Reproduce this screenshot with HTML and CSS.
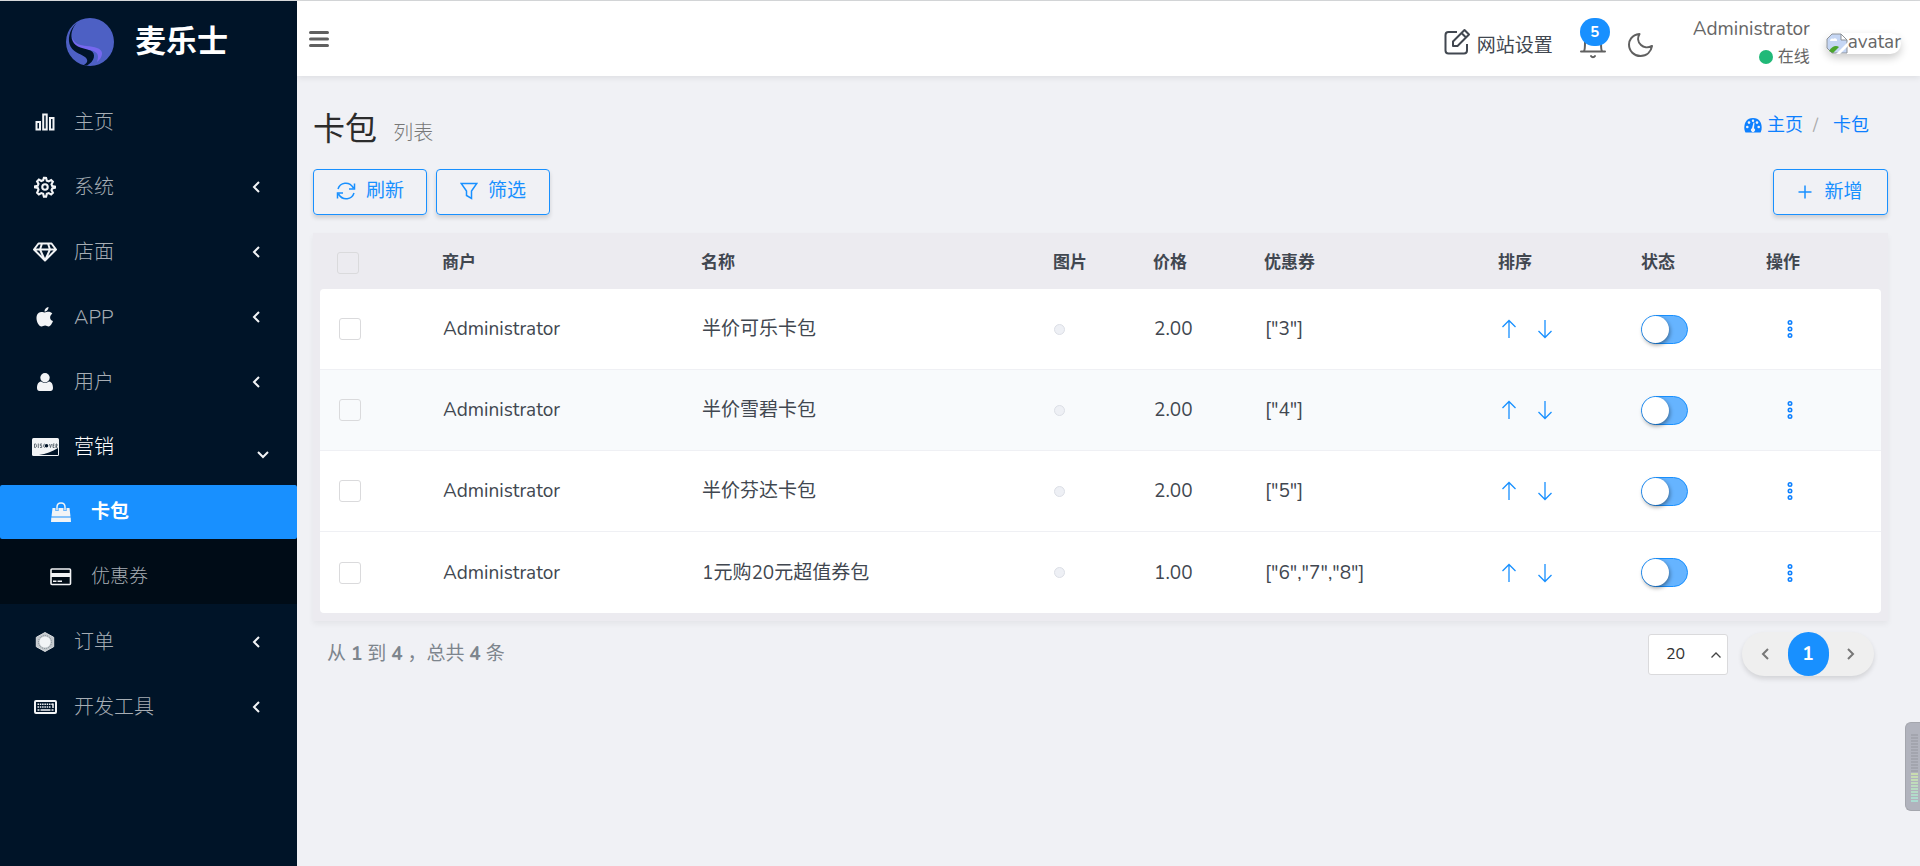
FILE: index.html
```html
<!DOCTYPE html>
<html lang="zh-CN">
<head>
<meta charset="utf-8">
<title>卡包</title>
<link rel="stylesheet" href="styles.css">
</head>
<body>
<svg class="sprite" aria-hidden="true">
  <symbol id="chev-left" viewBox="0 0 10 14"><path d="M8 2 3 7l5 5"/></symbol>
  <symbol id="arrow-up" viewBox="0 0 16 20"><path d="M8 19V1.500M1.500 8 8 1.500 14.500 8"/></symbol>
  <symbol id="arrow-down" viewBox="0 0 16 20"><path d="M8 1v17.500M1.500 12 8 18.500 14.500 12"/></symbol>
  <symbol id="dots" viewBox="0 0 8 20"><circle cx="4" cy="3.500" r="1.700"/><circle cx="4" cy="10" r="1.700"/><circle cx="4" cy="16.500" r="1.700"/></symbol>
</svg>
<div class="app">
  <aside class="sidebar">
    <a class="brand" href="#">
      <svg class="brand-logo" viewBox="0 0 48 48"><circle cx="24" cy="24" r="24" fill="#4d60c4"/><path d="M6.500 19c1 7 8 8.500 14 9 8 .8 15 2 15.500 7 .2 4-2.500 7-5 9 1-3 2-7-1-9.500-3-2.500-8-2.500-13-3.500C10 29.500 6 25 6.500 19z" fill="#7668ef"/><path d="M11 4.500C6 10 4 17 6.500 23c3 7 12 7 18 9.500 6 3 4 11-3.500 15h-4c5-2.500 5.500-5.500 2-8.500C14 35.500 6 34 3.500 26 1.500 18 5 10 11 4.500z" fill="#001428"/></svg>
      <span class="brand-name">麦乐士</span>
    </a>
    <nav class="menu">
      <a class="item" href="#"><span class="ico"><svg width="20" height="18" viewBox="0 0 20 18" fill="none" stroke="currentColor" stroke-width="2"><rect x="1.500" y="9" width="3.500" height="7.500"/><rect x="8.200" y="1.500" width="3.500" height="15"/><rect x="15" y="5" width="3.500" height="11.500"/></svg></span><span class="lbl">主页</span></a>
      <a class="item" href="#"><span class="ico"><svg width="22" height="22" viewBox="0 0 24 24" fill="none" stroke="currentColor" stroke-width="2.300"><circle cx="12" cy="12" r="3"/><path d="M12 2l1.200.1.800 3 2 .8 2.700-1.500 1.900 1.900L19.100 9l.8 2 3 .6v1.200l-3 .8-.8 2 1.500 2.700-1.900 1.900-2.700-1.500-2 .8-.8 3h-2.400l-.8-3-2-.8-2.700 1.500-1.900-1.900L4.900 15l-.8-2-3-.6v-1.200l3-.6.8-2-1.500-2.700 1.900-1.900L8 5.500l2-.8.800-2.700z"/></svg></span><span class="lbl">系统</span><svg class="chev"><use href="#chev-left"/></svg></a>
      <a class="item" href="#"><span class="ico"><svg width="24" height="20" viewBox="0 0 24 20" fill="none" stroke="currentColor" stroke-width="2" stroke-linejoin="round"><path d="M5.500 1.500h13L23 7.500 12 18.500 1 7.500zM1 7.500h22M9 1.500l-2 6 5 11 5-11-2-6"/></svg></span><span class="lbl">店面</span><svg class="chev"><use href="#chev-left"/></svg></a>
      <a class="item" href="#"><span class="ico"><svg width="18" height="20" viewBox="0 0 18 20" fill="currentColor"><path d="M12.500 0c.2 2-1.700 4.700-4 4.600C8.300 2.300 10.200.4 12.500 0zM1 8c1-2.500 3.500-3.500 5.500-2.900 1.600.6 2.400.6 4 0 2-.7 4.500-.2 5.800 1.700-3.300 2.200-2.700 6 .7 7.300-.7 2-2.500 5.200-4.200 5.400-1.500.1-2-.9-3.700-.9s-2.300 1-3.700.9C2.400 19.300-.8 12.500 1 8z"/></svg></span><span class="lbl">APP</span><svg class="chev"><use href="#chev-left"/></svg></a>
      <a class="item" href="#"><span class="ico"><svg width="16" height="18" viewBox="0 0 16 18" fill="currentColor"><circle cx="8" cy="4.700" r="4.700"/><path d="M4 8.500c2.500 1.900 5.500 1.900 8 0 3.400.5 4 4 4 6.500 0 2-1 3-2.600 3H2.600C1 18 0 17 0 15c0-2.500.6-6 4-6.500z"/></svg></span><span class="lbl">用户</span><svg class="chev"><use href="#chev-left"/></svg></a>
      <a class="item open" href="#"><span class="ico"><svg width="27" height="18" viewBox="0 0 27 18"><rect width="27" height="18" rx="1.500" fill="currentColor"/><path d="M7 17c7-1 13-3.500 19-7v7z" fill="#001428"/><g fill="none" stroke="#44505c" stroke-width=".8"><path d="M2.500 6v3.500h1.200c1 0 1-3.500 0-3.500zM6.300 5.500v4.500M10 6H8.300v1.700h1.400v1.800H8M13 6.200c-2-.7-2 3.800 0 3M17.500 6l1 3.500 1-3.500M22.500 6h-1.500v3.500h1.500M21 7.700h1.300M24 10V6h1v2h-1l1.200 2"/></g><circle cx="14.500" cy="7.700" r="1.800" fill="#001428"/></svg></span><span class="lbl">营销</span><svg class="chev chev-open"><use href="#chev-left"/></svg></a>
      <div class="submenu">
        <a class="item sub active" href="#"><span class="ico"><svg width="20" height="20" viewBox="0 0 20 20" fill="currentColor"><path d="M1.500 6h17l1 8.500H.5zM.3 15.500h19.400l.3 4.500H0z"/><path d="M6 9V5c0-5.500 8-5.500 8 0v4" fill="none" stroke="#1890ff" stroke-width="3"/><path d="M6 8.500V5c0-5.500 8-5.500 8 0v3.500" fill="none" stroke="currentColor" stroke-width="1.500"/></svg></span><span class="lbl">卡包</span></a>
        <a class="item sub" href="#"><span class="ico"><svg width="22" height="18" viewBox="0 0 22 18"><rect x="1" y="1" width="19.500" height="15.500" rx="1" fill="none" stroke="currentColor" stroke-width="1.600"/><path d="M1 5h20v4H1zM3 12.500h3.500V14H3zM7.500 12.500H12V14H7.500z" fill="currentColor"/></svg></span><span class="lbl">优惠券</span></a>
      </div>
      <a class="item" href="#"><span class="ico"><svg width="20" height="20" viewBox="0 0 20 20"><path d="M10 .5 18.700 5.300v9.400L10 19.500 1.300 14.700V5.300z" fill="#c3c8cc" stroke="#d9dcdf"/><circle cx="10" cy="10" r="6.500" fill="none" stroke="#7f8890" stroke-dasharray="1 1"/><circle cx="10" cy="10" r="5.500" fill="currentColor"/></svg></span><span class="lbl">订单</span><svg class="chev"><use href="#chev-left"/></svg></a>
      <a class="item" href="#"><span class="ico"><svg width="23" height="14" viewBox="0 0 23 14" fill="none" stroke="currentColor"><rect x="1" y="1" width="21" height="12" rx="1" stroke-width="2"/><path d="M3.500 4.200h16M3.500 7h13" stroke-width="1.500" stroke-dasharray="1.500 .8"/><path d="M3.500 10h2M6.500 10h10M17.500 10h2M19 3.500V8" stroke-width="1.500"/></svg></span><span class="lbl">开发工具</span><svg class="chev"><use href="#chev-left"/></svg></a>
    </nav>
  </aside>
  <div class="page">
    <header class="topbar">
      <button class="plain burger" aria-label="菜单"><svg width="20" height="18" viewBox="0 0 20 18" stroke="#606060" stroke-width="3" stroke-linecap="round"><path d="M1.500 2.500h17M1.500 9h17M1.500 15.500h17"/></svg></button>
      <div class="tools">
        <a class="setting" href="#"><svg width="27" height="27" viewBox="0 0 27 27" fill="none" stroke="#414750" stroke-width="2" stroke-linejoin="round"><path d="M13 4H4.500C2.500 4 1.500 5 1.500 7v15.500C1.500 24.500 2.500 25.500 4.500 25.500H20c2 0 3-1 3-3V16"/><path d="M9 13.500 20.500 2 25 6.500 13.500 18H9zM17.500 5l4.500 4.500"/></svg><span>网站设置</span></a>
        <button class="plain bell" aria-label="通知"><svg width="26" height="34" viewBox="0 0 26 34" fill="none" stroke="#606060" stroke-width="2" stroke-linecap="round"><path d="M1 26.500h24M4 26c1-1 1-4 1-9 0-5 4-8 8-8s8 3 8 8c0 5 0 8 1 9M11 31c1 1.500 3 1.500 4 0"/></svg><span class="badge">5</span></button>
        <button class="plain moon" aria-label="夜间模式"><svg width="25" height="24" viewBox="0 0 25 24" fill="none" stroke="#606060" stroke-width="2" stroke-linejoin="round"><path d="M11.500 1C3 2 1 8 1 11.500 1 18 6 23 12.500 23 19 23 23 18.500 24 13c-4 2-8.500 1.500-11-1C9.500 9 9.500 4.500 11.500 1z"/></svg></button>
        <div class="user"><span class="user-name">Administrator</span><span class="status"><i class="dot"></i>在线</span></div>
        <a class="avatar" href="#"><svg width="22" height="21" viewBox="0 0 22 21"><path d="M6 1h9l6 6v13H6L1 15V6z" fill="#c5d6f4" stroke="#8d9298"/><path d="M15 1v6h6z" fill="#fff" stroke="#8d9298"/><path d="M4 8c0-2 2-3 3-2 2-2 5 0 4 2z" fill="#fff"/><path d="M3 18c3-5 7-6 10-4l-6 6z" fill="#4ba52d"/><path d="M10 21 22 9v4l-8 8z" fill="#fff"/></svg><span>avatar</span></a>
      </div>
    </header>
    <main class="content">
      <div class="heading">
        <h1>卡包 <small>列表</small></h1>
        <nav class="crumbs"><a href="#"><svg width="18" height="15" viewBox="0 0 18 15"><path d="M1.500 14.500C-1 10 0 0 9 0s10 10 7.500 14.500z" fill="#0d80ff"/><g fill="#f0f1f5"><circle cx="3.300" cy="9" r="1.300"/><circle cx="5" cy="4.600" r="1.300"/><circle cx="9" cy="2.700" r="1.200"/><circle cx="13" cy="4.600" r="1.300"/><circle cx="14.700" cy="9" r="1.300"/><path d="m9.500 4.500 1 .2-.5 5.500a2 2 0 1 1-2 0z"/></g></svg>主页</a><span class="sep">/</span><a href="#">卡包</a></nav>
      </div>
      <div class="actions">
        <button class="btn"><svg width="20" height="18" viewBox="0 0 20 18" fill="none" stroke="currentColor" stroke-width="1.500"><path d="M2 7C4 .5 13-1.500 17.500 6M18.500 1.500V7H13M18 11c-2 6.500-11 8.500-15.500 1M1.500 16.500V11H7"/></svg>刷新</button>
        <button class="btn"><svg width="18" height="18" viewBox="0 0 18 18" fill="none" stroke="currentColor" stroke-width="1.500"><path d="M1.200 1.500h15.600L11.500 9v7.500L6.500 13.500V9z"/></svg>筛选</button>
        <button class="btn btn-add"><svg width="14" height="14" viewBox="0 0 14 14" stroke="currentColor" stroke-width="1.500"><path d="M7 .5v13M.5 7h13"/></svg>新增</button>
      </div>
      <div class="card">
        <table>
          <colgroup><col class="c-check"><col class="c-shop"><col class="c-name"><col class="c-pic"><col class="c-price"><col class="c-coupon"><col class="c-sort"><col class="c-state"><col class="c-op"></colgroup>
          <thead><tr><th><input class="tick" type="checkbox" aria-label="全选"></th><th>商户</th><th>名称</th><th>图片</th><th>价格</th><th>优惠券</th><th>排序</th><th>状态</th><th>操作</th></tr></thead>
          <tbody>
            <tr><td><input class="tick" type="checkbox" aria-label="选择"></td><td>Administrator</td><td>半价可乐卡包</td><td><i class="thumb"></i></td><td>2.00</td><td>["3"]</td><td><div class="sort"><button class="plain" aria-label="上移"><svg><use href="#arrow-up"/></svg></button><button class="plain" aria-label="下移"><svg><use href="#arrow-down"/></svg></button></div></td><td><input class="switch" type="checkbox" role="switch" aria-label="状态"></td><td><button class="plain more" aria-label="操作"><svg><use href="#dots"/></svg></button></td></tr>
            <tr><td><input class="tick" type="checkbox" aria-label="选择"></td><td>Administrator</td><td>半价雪碧卡包</td><td><i class="thumb"></i></td><td>2.00</td><td>["4"]</td><td><div class="sort"><button class="plain" aria-label="上移"><svg><use href="#arrow-up"/></svg></button><button class="plain" aria-label="下移"><svg><use href="#arrow-down"/></svg></button></div></td><td><input class="switch" type="checkbox" role="switch" aria-label="状态"></td><td><button class="plain more" aria-label="操作"><svg><use href="#dots"/></svg></button></td></tr>
            <tr><td><input class="tick" type="checkbox" aria-label="选择"></td><td>Administrator</td><td>半价芬达卡包</td><td><i class="thumb"></i></td><td>2.00</td><td>["5"]</td><td><div class="sort"><button class="plain" aria-label="上移"><svg><use href="#arrow-up"/></svg></button><button class="plain" aria-label="下移"><svg><use href="#arrow-down"/></svg></button></div></td><td><input class="switch" type="checkbox" role="switch" aria-label="状态"></td><td><button class="plain more" aria-label="操作"><svg><use href="#dots"/></svg></button></td></tr>
            <tr><td><input class="tick" type="checkbox" aria-label="选择"></td><td>Administrator</td><td>1元购20元超值券包</td><td><i class="thumb"></i></td><td>1.00</td><td>["6","7","8"]</td><td><div class="sort"><button class="plain" aria-label="上移"><svg><use href="#arrow-up"/></svg></button><button class="plain" aria-label="下移"><svg><use href="#arrow-down"/></svg></button></div></td><td><input class="switch" type="checkbox" role="switch" aria-label="状态"></td><td><button class="plain more" aria-label="操作"><svg><use href="#dots"/></svg></button></td></tr>
          </tbody>
        </table>
      </div>
      <footer class="table-foot">
        <p class="summary">从 <b>1</b> 到 <b>4</b> ，总共 <b>4</b> 条</p>
        <div class="per-page"><select aria-label="每页条数"><option>20</option></select><svg width="10" height="6" viewBox="0 0 10 6" fill="none" stroke="#444" stroke-width="1.300"><path d="M.5 5.500 5 1l4.500 4.500"/></svg></div>
        <div class="pager"><button class="plain" aria-label="上一页"><svg><use href="#chev-left"/></svg></button><button class="plain current">1</button><button class="plain next" aria-label="下一页"><svg><use href="#chev-left"/></svg></button></div>
      </footer>
    </main>
  </div>
</div>
<div class="meter" aria-hidden="true"><i class="meter-idle"></i><i class="meter-live"></i></div>
</body>
</html>
```

FILE: styles.css
```css
* { box-sizing: border-box; }
body {
  margin: 0;
  background: #f0f1f5;
  color: #414750;
  font-family: "Nunito", "Noto Sans", "Noto Sans CJK SC", sans-serif;
  font-size: 19px;
  font-weight: 400;
  line-height: 28px;
}
a { color: inherit; text-decoration: none; }
svg { display: block; flex: none; }
.sprite { position: absolute; width: 0; height: 0; }
.plain { border: 0; padding: 0; background: none; color: inherit; font: inherit; cursor: pointer; }

.app { display: flex; min-height: 100vh; border-top: 1px solid #d6d8da; }

/* Sidebar */
.sidebar { flex: none; width: 297px; background: #001428; color: #a6adb4; }
.brand { display: flex; align-items: center; gap: 21px; height: 94px; padding: 0 0 12px 66px; }
.brand-logo { width: 48px; height: 48px; }
.brand-name { color: #fff; font-size: 31px; font-weight: 700; line-height: 40px; }
.menu, .submenu { display: flex; flex-direction: column; gap: 11px; }
.item { display: flex; align-items: center; height: 54px; padding: 0 36px 0 31px; }
.ico { display: flex; justify-content: center; width: 28px; margin-right: 15px; color: #f2f4f6; }
.lbl { flex: 1; padding-top: 1px; font-size: 20px; font-weight: 300; }
.chev { width: 10px; height: 14px; fill: none; stroke: #f2f4f6; stroke-width: 2; }
.open { padding-right: 29px; color: #fff; }
.chev-open { align-self: flex-end; margin-bottom: 12px; transform: rotate(-90deg); }
.submenu { background: #000c17; }
.sub { padding-left: 47px; }
.sub .lbl { padding: 0; font-size: 19px; }
.sub .ico { margin-right: 16px; }
.active { border-radius: 2px; background: #1890ff; color: #fff; }
.active .lbl { font-weight: 700; }

/* Top bar */
.page { flex: 1; min-width: 0; }
.topbar { display: flex; justify-content: space-between; height: 75px; padding: 0 19px 0 12px; background: #fff; box-shadow: 0 2px 6px rgba(0, 0, 0, .08); }
.burger { align-self: center; }
.tools { display: flex; align-items: center; }
.setting { display: flex; align-items: center; gap: 6px; padding-top: 14px; }
.setting svg { margin-bottom: 8px; }
.bell { position: relative; margin: 6px 0 0 27px; }
.badge { position: absolute; top: -7px; left: 0; width: 30px; border-radius: 14px; background: #1890ff; color: #fff; font-size: 15px; font-weight: 700; }
.moon { margin: 12px 0 0 22px; }
.user { display: flex; flex-direction: column; align-items: flex-end; margin: 8px 16px 0 40px; color: #666; }
.status { display: flex; align-items: center; gap: 5px; font-size: 16px; }
.dot { width: 14px; height: 14px; border-radius: 50%; background: #21b978; }
.avatar { display: flex; align-items: center; height: 21px; margin-top: 10px; border-radius: 11px; color: #666; box-shadow: 0 4px 8px rgba(0, 0, 0, .2); }
.avatar span { padding-bottom: 3px; }

/* Heading and actions */
.content { padding: 0 32px 24px 16px; }
.heading { display: flex; justify-content: space-between; height: 93px; padding: 30px 19px 0 0; }
h1 { margin: 0; color: #2c2c2c; font-size: 32px; font-weight: 400; line-height: 48px; }
h1 small { margin-left: 8px; color: #777; font-size: 20px; font-weight: 300; }
.crumbs { display: flex; align-items: center; height: 38px; color: #0d80ff; font-size: 18px; }
.crumbs a { display: flex; align-items: center; gap: 5px; }
.sep { margin: 0 15px 0 10px; color: #aaa; }
.actions { display: flex; gap: 9px; margin-bottom: 18px; }
.btn { display: flex; align-items: center; justify-content: center; gap: 10px; width: 114px; height: 46px; padding: 0 0 3px; border: 1px solid #1890ff; border-radius: 4px; background: transparent; color: #1890ff; font: inherit; box-shadow: 0 3px 4px rgba(0, 0, 0, .14); }
.btn-add { gap: 12px; width: 115px; margin-left: auto; padding: 0; }

/* Table */
.card { padding: 0 8px 8px 7px; background: #ecebf0; box-shadow: 0 3px 6px rgba(0, 0, 0, .05); }
table { width: 100%; table-layout: fixed; border-collapse: separate; border-spacing: 0; }
.c-check { width: 106px; }
.c-shop { width: 259px; }
.c-name { width: 352px; }
.c-pic { width: 100px; }
.c-price { width: 111px; }
.c-coupon { width: 234px; }
.c-sort { width: 143px; }
.c-state { width: 125px; }
.c-op { width: 131px; }
th { height: 56px; padding: 4px 16px 0; font-size: 17px; font-weight: 700; text-align: left; line-height: 24px; }
td { height: 81px; padding: 0 0 0 17px; border-bottom: 1px solid #eff0f4; background: #fff; }
tbody tr:nth-child(2) td { background: #f8fafc; }
tbody tr:last-child td { border-bottom: 0; }
tbody tr:first-child td:first-child { border-top-left-radius: 4px; }
tbody tr:first-child td:last-child { border-top-right-radius: 4px; }
tbody tr:last-child td:first-child { border-bottom-left-radius: 4px; }
tbody tr:last-child td:last-child { border-bottom-right-radius: 4px; }
.tick { display: block; width: 22px; height: 22px; margin: 0 0 0 1px; appearance: none; border: 1px solid #dadadc; border-radius: 3px; }
td .tick { margin-left: 2px; }
.thumb { display: block; width: 11px; height: 11px; border: 1px solid #dcdfe6; border-radius: 50%; background: #eef0f5; }
.sort { display: flex; gap: 20px; padding-left: 2px; color: #1890ff; }
.sort svg { width: 16px; height: 20px; fill: none; stroke: currentColor; stroke-width: 1.3; }
.switch { display: block; width: 47px; height: 29px; margin: 0 0 0 -1px; appearance: none; border: 1px solid #1890ff; border-radius: 15px; background: #66b4ff; }
.switch::before { content: ""; display: block; width: 27px; height: 27px; border-radius: 50%; background: #fff; box-shadow: 1px 2px 4px rgba(0, 0, 0, .4); }
.more { display: block; margin-left: 19px; }
.more svg { width: 8px; height: 20px; fill: none; stroke: #0d80ff; stroke-width: 1.6; }

/* Footer */
.table-foot { display: flex; align-items: center; padding: 11px 14px 0; }
.summary { flex: 1; margin: 0; color: #7d858d; }
.per-page { position: relative; margin-right: 14px; }
.per-page select { display: block; width: 80px; height: 41px; padding: 0 17px; appearance: none; border: 1px solid #dadadc; border-radius: 3px; background: #fff; color: #333; font: inherit; font-size: 16px; }
.per-page svg { position: absolute; top: 18px; right: 7px; }
.pager { display: flex; align-items: center; width: 132px; height: 44px; border-radius: 22px; background: #efefef; box-shadow: 0 3px 5px rgba(0, 0, 0, .12); }
.pager button { display: flex; flex: 1; align-items: center; justify-content: center; }
.pager svg { width: 10px; height: 14px; fill: none; stroke: #777; stroke-width: 2; }
.pager .current { flex: 0 0 41px; height: 44px; border-radius: 21px; background: #1890ff; color: #fff; font-weight: 700; }
.next svg { transform: rotate(180deg); }

/* Level meter docked to the window edge */
.meter { position: fixed; top: 722px; right: 0; width: 15px; height: 89px; padding: 11px 2px 0 5px; border: 1px solid #a4a6ad; border-right: 0; border-radius: 6px 0 0 6px; background: #b1b3bd; }
.meter i { display: block; }
.meter-idle { height: 39px; background: repeating-linear-gradient(#a3a5ae 0 2px, #b1b3bd 2px 3px); }
.meter-live { height: 30px; background: repeating-linear-gradient(transparent 0 2px, #b1b3bd 2px 3px), linear-gradient(#cbdcae, #a9dcd4); }
```
